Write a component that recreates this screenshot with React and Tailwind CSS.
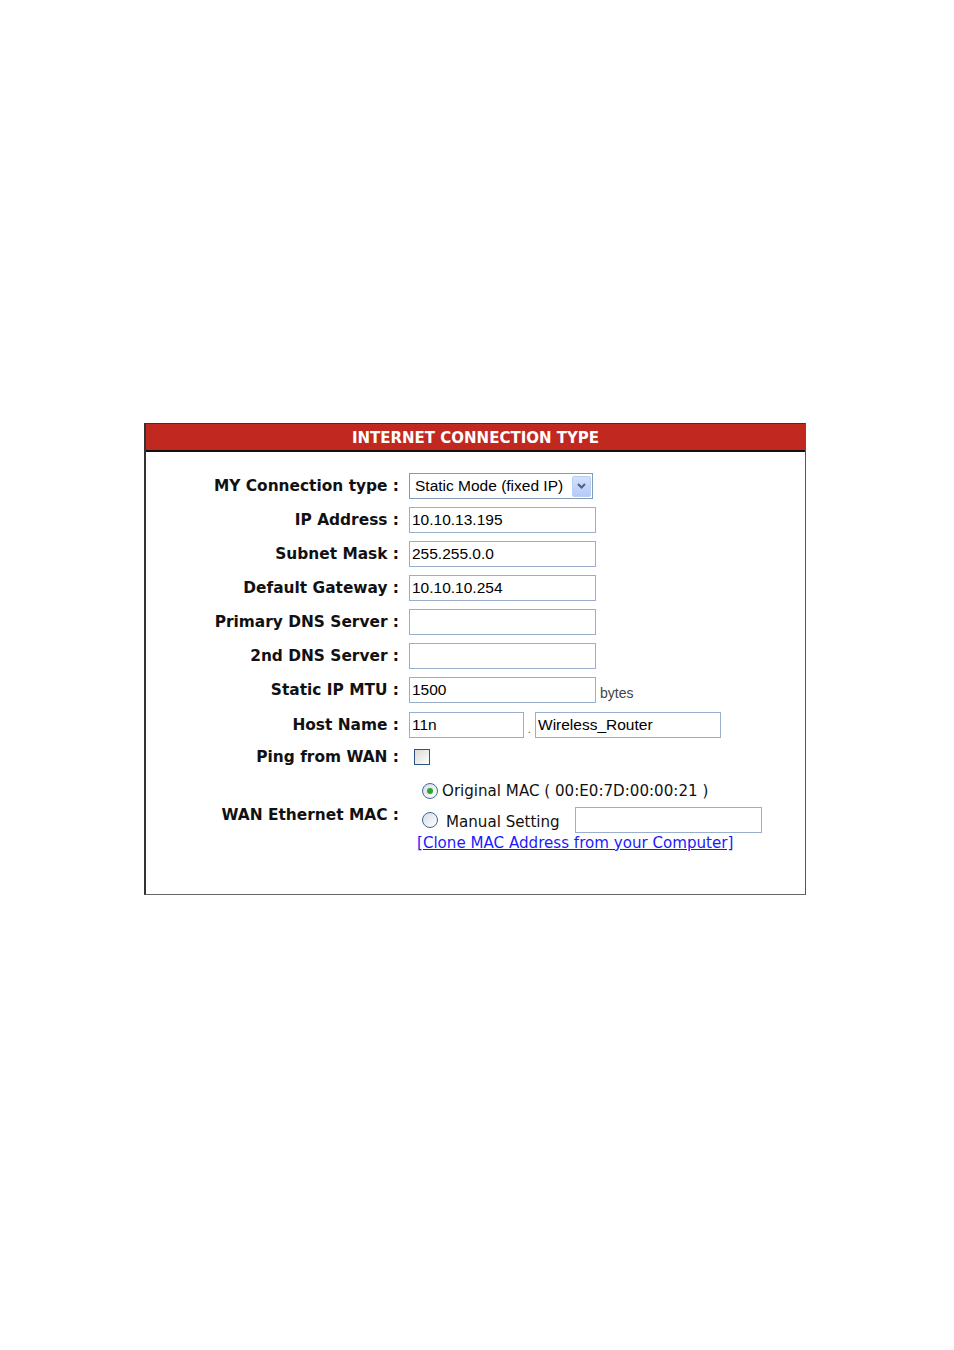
import React from "react";

const label = "w-[254px] shrink-0 text-right pr-[1px] pt-[2px] font-bold text-[15.4px] text-[#111]";
const lblFont = { fontFamily: '"DejaVu Sans", Verdana, sans-serif' };

function TextInput({ value = "", w = "w-[187px]" }) {
  return (
    <div
      className={`${w} h-[26px] border border-[#98aecb] bg-white flex items-center pl-[2px] text-[15.5px] text-black leading-none`}
      style={{ fontFamily: '"Liberation Sans", Arial, sans-serif' }}
    >
      {value}
    </div>
  );
}

function Row({ title, children, h = "h-[34px]" }) {
  return (
    <div className={`flex items-center ${h}`}>
      <div className={label} style={lblFont}>{title}</div>
      <div className="ml-[9px] flex items-center">{children}</div>
    </div>
  );
}

function Radio({ checked }) {
  return (
    <div className="w-[16px] h-[16px] rounded-full border border-[#3d6a96] bg-gradient-to-br from-[#d7dde3] to-white flex items-center justify-center">
      {checked && <div className="w-[6px] h-[6px] rounded-full bg-[#2fa52f]" />}
    </div>
  );
}

export default function App() {
  return (
    <div className="w-[954px] h-[1350px] bg-white pt-[423px]">
      <div className="ml-[144px] w-[662px] border-l-2 border-r border-b border-l-[#333] border-r-[#555] border-b-[#666]">
        <div className="h-[29px] border-t border-[#333] bg-[#c1281f] border-b-2 border-b-[#111] flex items-center justify-center pt-[3px]">
          <span className="text-white font-bold text-[15px] leading-none" style={lblFont}>
            INTERNET CONNECTION TYPE
          </span>
        </div>
        <div className="pt-[17px] pb-[38px]">
          <Row title="MY Connection type :">
            <div
              className="w-[184px] h-[26px] border border-[#7f9db9] bg-white flex items-center justify-between pl-[5px] pr-[1px] text-[15.5px] text-black leading-none"
              style={{ fontFamily: '"Liberation Sans", Arial, sans-serif' }}
            >
              <span>Static Mode (fixed IP)</span>
              <div className="w-[19px] h-[21px] rounded-[2px] border border-[#bccdf5] bg-gradient-to-b from-[#d4e1fc] to-[#b6c9f7] flex items-center justify-center">
                <svg width="9" height="6" viewBox="0 0 9 6">
                  <path d="M1 1 L4.5 4.5 L8 1" fill="none" stroke="#4d6185" strokeWidth="2" />
                </svg>
              </div>
            </div>
          </Row>
          <Row title="IP Address :"><TextInput value="10.10.13.195" /></Row>
          <Row title="Subnet Mask :"><TextInput value="255.255.0.0" /></Row>
          <Row title="Default Gateway :"><TextInput value="10.10.10.254" /></Row>
          <Row title="Primary DNS Server :"><TextInput /></Row>
          <Row title="2nd DNS Server :"><TextInput /></Row>
          <Row title="Static IP MTU :">
            <TextInput value="1500" />
            <span
              className="ml-[4px] mt-[6px] text-[14px] text-[#444] leading-none"
              style={{ fontFamily: '"Liberation Sans", Arial, sans-serif' }}
            >
              bytes
            </span>
          </Row>
          <Row title="Host Name :" h="h-[36px]">
            <TextInput value="11n" w="w-[115px]" />
            <span className="w-[11px] text-center self-end mb-[3px] text-[10px] text-[#444] leading-none" style={{ fontFamily: '"Liberation Sans", Arial, sans-serif' }}>.</span>
            <TextInput value="Wireless_Router" w="w-[186px]" />
          </Row>
          <Row title="Ping from WAN :" h="h-[27px]">
            <div className="ml-[5px] w-[16px] h-[16px] border border-[#2a5680] bg-gradient-to-br from-[#d9d9d3] to-white" />
          </Row>
          <div className="flex items-center pt-[8px] pb-[5px]">
            <div className={label} style={lblFont}>WAN Ethernet MAC :</div>
            <div className="ml-[9px] flex flex-col text-[15.1px] text-[#111]" style={lblFont}>
              <div className="h-[26px] flex items-center pl-[13px]">
                <Radio checked />
                <span className="ml-[4px] mt-[1px] leading-none">Original MAC ( 00:E0:7D:00:00:21 )</span>
              </div>
              <div className="mt-[3px] h-[26px] flex items-center pl-[13px]">
                <Radio />
                <span className="ml-[8px] mt-[5px] leading-none">Manual Setting</span>
                <div className="ml-[15px] w-[187px] h-[26px] border border-[#98aecb] bg-white" />
              </div>
              <div className="h-[18px] flex items-center pl-[8px] pt-[3px]">
                <span className="text-[#1a1aff] underline leading-none">[Clone MAC Address from your Computer]</span>
              </div>
            </div>
          </div>
        </div>
      </div>
    </div>
  );
}
